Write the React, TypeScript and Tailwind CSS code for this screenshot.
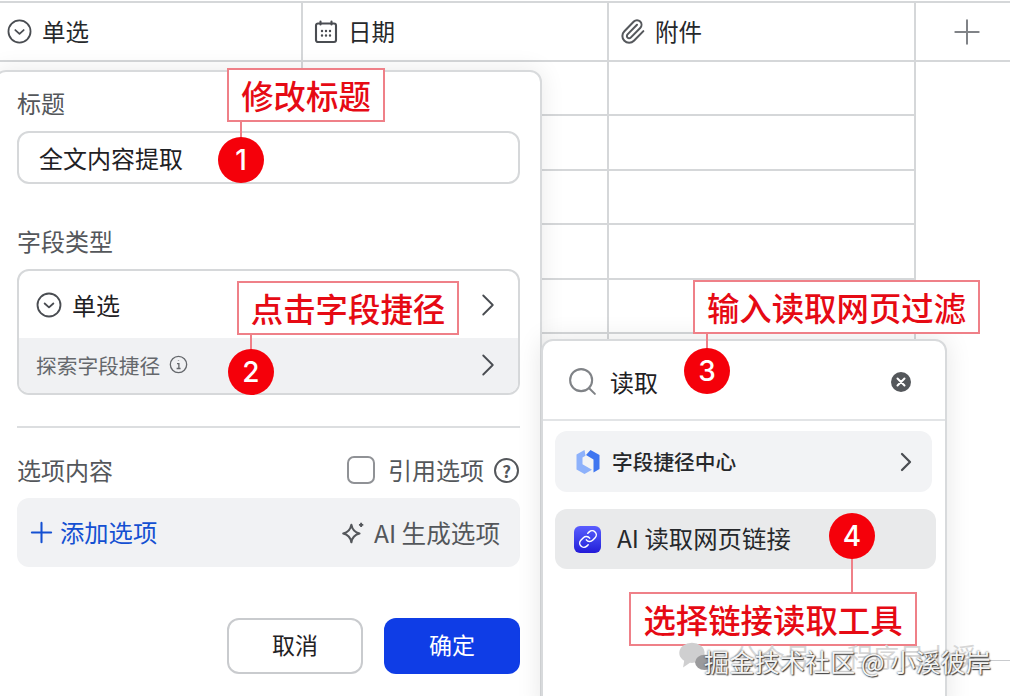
import { ChevronRight, Link, Paperclip, Plus, Search } from "lucide-react";

const cjk = "font-['Noto_Sans_CJK_SC','Noto_Sans',sans-serif]";

function CircleDown({ className }: { className: string }) {
  return (
    <svg viewBox="0 0 24 24" fill="none" stroke="#4a4d52" strokeWidth="1.7" strokeLinecap="round" strokeLinejoin="round" className={className}>
      <circle cx="12" cy="12" r="10.6" />
      <path d="M8 10.6l4 3.6 4-3.6" />
    </svg>
  );
}

function CalendarIcon() {
  return (
    <svg viewBox="0 0 24 24" fill="none" className="h-[24px] w-[24px]" stroke="#4a4d52" strokeWidth="2.1">
      <rect x="2" y="3.500" width="20" height="18.500" rx="2" />
      <path d="M6.500 1.500v3M17.500 1.500v3" strokeLinecap="round" />
      <path d="M8 11h.01M12 11h.01M16 11h.01M8 15.500h.01M12 15.500h.01M16 15.500h.01" strokeWidth="2.400" strokeLinecap="round" />
    </svg>
  );
}

function HeaderCell({ icon, label, gap }: { icon: React.ReactNode; label: string; gap: string }) {
  return (
    <div className={`flex items-center border-r-2 border-[#d5d7d9] pl-[7px] text-[23.500px] text-[#26282b] ${gap}`}>
      {icon}
      <span>{label}</span>
    </div>
  );
}

function Table() {
  const rows = [0, 1, 2, 3, 4];
  return (
    <div className="mt-[1px] grid grid-cols-[303px_306px_307px_94px] border-t-2 border-[#d5d7d9]">
      <div className="col-span-4 grid h-[59px] grid-cols-subgrid border-b-2 border-[#d5d7d9]">
        <HeaderCell icon={<CircleDown className="h-[25px] w-[25px]" />} label="单选" gap="gap-[10px]" />
        <HeaderCell icon={<span className="ml-[4px]"><CalendarIcon /></span>} label="日期" gap="gap-[10px]" />
        <HeaderCell icon={<Paperclip className="ml-[3px] h-[27px] w-[27px] text-[#55585c]" strokeWidth={1.8} />} label="附件" gap="gap-[9px]" />
        <div className="flex items-center justify-center pl-[8px]">
          <Plus className="h-[40px] w-[40px] text-[#808387]" strokeWidth={1.2} />
        </div>
      </div>
      {rows.map((row) => (
        <div key={row} className="col-span-4 grid h-[54.400px] grid-cols-subgrid">
          <div className="border-r-2 border-[#d5d7d9]" />
          <div className="border-r-2 border-b-2 border-[#d5d7d9]" />
          <div className="border-r-2 border-b-2 border-[#d5d7d9]" />
          <div />
        </div>
      ))}
      <div className="col-span-4 grid h-[8px] grid-cols-subgrid">
        <div className="border-r-2 border-[#d5d7d9]" />
        <div className="border-r-2 border-[#d5d7d9]" />
        <div className="border-r-2 border-[#d5d7d9]" />
        <div />
      </div>
    </div>
  );
}

function FieldPanel() {
  return (
    <div className="absolute top-[70px] bottom-[-20px] left-[-6px] flex w-[548px] flex-col rounded-[12px] border-2 border-[#d8dadc] bg-white pr-[20px] pl-[21px] shadow-[0_0_24px_rgba(0,0,0,0.09)]">
      <div className="mt-[15px] text-[24px] leading-[32px] text-[#54575b]">标题</div>
      <div className="mt-[12px] flex h-[53px] items-center rounded-[12px] border-2 border-[#d6d8da] pl-[20px] text-[24px] text-[#1f2124]">全文内容提取</div>
      <div className="mt-[41px] text-[24px] leading-[32px] text-[#54575b]">字段类型</div>
      <div className="mt-[12px] overflow-hidden rounded-[12px] border-2 border-[#d6d8da]">
        <div className="flex h-[67px] items-center pr-[11px] pl-[17px]">
          <CircleDown className="h-[26px] w-[26px]" />
          <span className="ml-[10px] text-[24px] text-[#1f2124]">单选</span>
          <ChevronRight className="ml-auto h-[38px] w-[38px] text-[#4a4d52]" strokeWidth={1.2} />
        </div>
        <div className="flex h-[55px] items-center bg-[#f0f1f3] pr-[11px] pl-[17px]">
          <span className="text-[20.700px] text-[#65686c]">探索字段捷径</span>
          <svg viewBox="0 0 20 20" fill="none" stroke="#65686c" strokeWidth="1.400" className="mt-[-3px] ml-[9px] h-[19px] w-[19px]">
            <circle cx="10" cy="10" r="8.600" />
            <path d="M8.400 9h2v5M8 14.200h4.200M10 5.800v.6" />
          </svg>
          <ChevronRight className="mt-[-1px] ml-auto h-[38px] w-[38px] text-[#4a4d52]" strokeWidth={1.2} />
        </div>
      </div>
      <div className="mt-[31px] h-[2px] bg-[#dcdee0]" />
      <div className="mt-[26px] flex h-[32px] items-center">
        <span className="text-[24px] text-[#54575b]">选项内容</span>
        <span className="ml-auto h-[28px] w-[28px] rounded-[7px] border-2 border-[#909296]" />
        <span className="ml-[13px] text-[24px] text-[#54575b]">引用选项</span>
        <span className="mr-[1px] ml-[10px] flex h-[25px] w-[25px] items-center justify-center rounded-full border-2 border-[#54575b] text-[17px] font-bold leading-none text-[#54575b]">?</span>
      </div>
      <div className="mt-[12px] flex h-[69px] items-center rounded-[12px] bg-[#f1f2f4] pr-[20px] pl-[8px]">
        <Plus className="h-[33px] w-[33px] text-[#1450d2]" strokeWidth={1.500} />
        <span className="ml-[2px] text-[24.300px] text-[#1450d2]">添加选项</span>
        <svg viewBox="0 0 24 24" fill="none" stroke="#54575b" strokeWidth="2" strokeLinejoin="round" className="ml-auto h-[26px] w-[26px]">
          <path d="M10.500 4.500c.8 4.400 3 6.800 7.500 8-4.500 1.200-6.700 3.600-7.500 8-.8-4.400-3-6.800-7.500-8 4.500-1.200 6.700-3.600 7.500-8z" />
          <path d="M19.500 2.500v4M17.500 4.500h4" strokeWidth="1.800" />
        </svg>
        <span className="ml-[8px] text-[24.600px] text-[#54575b]">AI 生成选项</span>
      </div>
      <div className="mt-[51px] flex justify-end gap-[21px]">
        <button className="h-[56px] w-[136px] rounded-[12px] border-2 border-[#c9cbce] bg-white pb-[3px] text-[23px] text-[#1f2124]">取消</button>
        <button className="h-[56px] w-[136px] rounded-[12px] bg-[#0f3de6] pb-[3px] text-[23px] text-white">确定</button>
      </div>
    </div>
  );
}

function ToolLogo() {
  return (
    <svg viewBox="0 0 26 26" className="h-[26px] w-[26px]">
      <path d="M9.500 1 1.500 5.500v15l8 4.500 7.500-4.300-6.500-3.700-3-1.800V8.500l3-1.800z" fill="#8db1fb" />
      <path d="M15.500 1 24.500 6v14l-6 3.400V10.500L11 6z" fill="#3f76f0" />
    </svg>
  );
}

function ShortcutPanel() {
  return (
    <div className="absolute top-[339px] bottom-[-20px] left-[541px] w-[406px] rounded-[12px] border-2 border-[#d8dadc] bg-white shadow-[0_0_26px_rgba(0,0,0,0.1)]">
      <div className="flex h-[80px] items-center border-b-2 border-[#e2e4e6] pt-[3px] pr-[34px] pl-[23px]">
        <Search className="h-[33px] w-[33px] text-[#808387]" strokeWidth={1.500} />
        <span className="ml-[11px] text-[24px] text-[#1f2124]">读取</span>
        <span className="ml-auto flex h-[20px] w-[20px] items-center justify-center rounded-full bg-[#54575b]">
          <svg viewBox="0 0 12 12" stroke="white" strokeWidth="2" strokeLinecap="round" className="h-[12px] w-[12px]">
            <path d="M2.500 2.500l7 7M9.500 2.500l-7 7" />
          </svg>
        </span>
      </div>
      <div className="mt-[10px] ml-[12px] flex h-[61px] w-[377px] items-center rounded-[12px] bg-[#f2f3f5] pr-[10px] pl-[20px]">
        <ToolLogo />
        <span className="ml-[11px] text-[20.700px] font-medium text-[#26282b]">字段捷径中心</span>
        <ChevronRight className="ml-auto h-[32px] w-[32px] text-[#4a4d52]" strokeWidth={1.700} />
      </div>
      <div className="mt-[17px] ml-[12px] flex h-[60px] w-[381px] items-center rounded-[12px] bg-[#e9eaeb] pl-[19px]">
        <span className="flex h-[27px] w-[27px] items-center justify-center rounded-[6px] bg-gradient-to-b from-[#5a5cff] to-[#2418d8]">
          <Link className="h-[20px] w-[20px] text-white" strokeWidth={1.800} />
        </span>
        <span className="ml-[16px] pb-[2px] text-[24.400px] text-[#26282b]">AI 读取网页链接</span>
      </div>
    </div>
  );
}

function Note({ text, n, box, line, dot }: { text: string; n: string; box: string; line: string; dot: string }) {
  return (
    <>
      <div className={`absolute z-10 w-[2px] bg-[#ef8088] ${line}`} />
      <div className={`absolute z-10 flex h-[54px] items-center justify-center border-2 border-[#ef8088] bg-white text-[32.400px] font-medium leading-none whitespace-nowrap text-[#e60a14] ${box}`}>{text}</div>
      <div className={`absolute z-10 flex h-[46px] w-[46px] items-center justify-center rounded-full bg-[#f5000a] font-['Inter',sans-serif] text-[28px] leading-none font-medium text-white ${dot}`}>{n}</div>
    </>
  );
}

function Watermark() {
  return (
    <div className="absolute top-[640px] left-[678px] z-20 h-[44px] w-[332px]">
      <svg viewBox="0 0 30 24" className="absolute top-[0px] left-[0px] h-[32px] w-[38px]">
        <ellipse cx="11" cy="9.500" rx="10" ry="8" fill="#cfcfd0" />
        <path d="M5 15l-1 6 6-4z" fill="#cfcfd0" />
        <ellipse cx="21" cy="17" rx="7.500" ry="6" fill="#9a9a9c" />
      </svg>
      <span className="absolute top-[-4px] left-[55px] text-[26px] whitespace-nowrap text-[#d6d6d6]">公众号</span>
      <span className="absolute top-[-4px] left-[169px] text-[26px] whitespace-nowrap text-[#d6d6d6]">程序员小溪</span>
      <span className="absolute top-[3px] left-[26px] text-[25.200px] whitespace-nowrap text-[#f4f4f4] [text-shadow:0_0_2px_#333,1px_1px_1px_#444]">掘金技术社区 @ 小溪彼岸</span>
    </div>
  );
}

export default function App() {
  return (
    <div className={`relative h-[696px] w-[1010px] overflow-hidden bg-white ${cjk}`}>
      <Table />
      <FieldPanel />
      <ShortcutPanel />
      <Note text="修改标题" n="1" box="top-[68px] left-[227px] w-[158px]" line="top-[120px] left-[240px] h-[20px]" dot="top-[137px] left-[218px]" />
      <Note text="点击字段捷径" n="2" box="top-[281px] left-[237px] w-[222px]" line="top-[333px] left-[250px] h-[20px]" dot="top-[349px] left-[228px]" />
      <Note text="输入读取网页过滤" n="3" box="top-[280px] left-[693px] w-[287px]" line="top-[332px] left-[706px] h-[20px]" dot="top-[348px] left-[684px]" />
      <Note text="选择链接读取工具" n="4" box="top-[592px] left-[629px] w-[288px]" line="top-[556px] left-[851px] h-[38px]" dot="top-[513px] left-[829px]" />
      <Watermark />
      <div className="absolute top-[660px] left-[990px] h-[1px] w-[20px] bg-[#c9cbce]" />
    </div>
  );
}
